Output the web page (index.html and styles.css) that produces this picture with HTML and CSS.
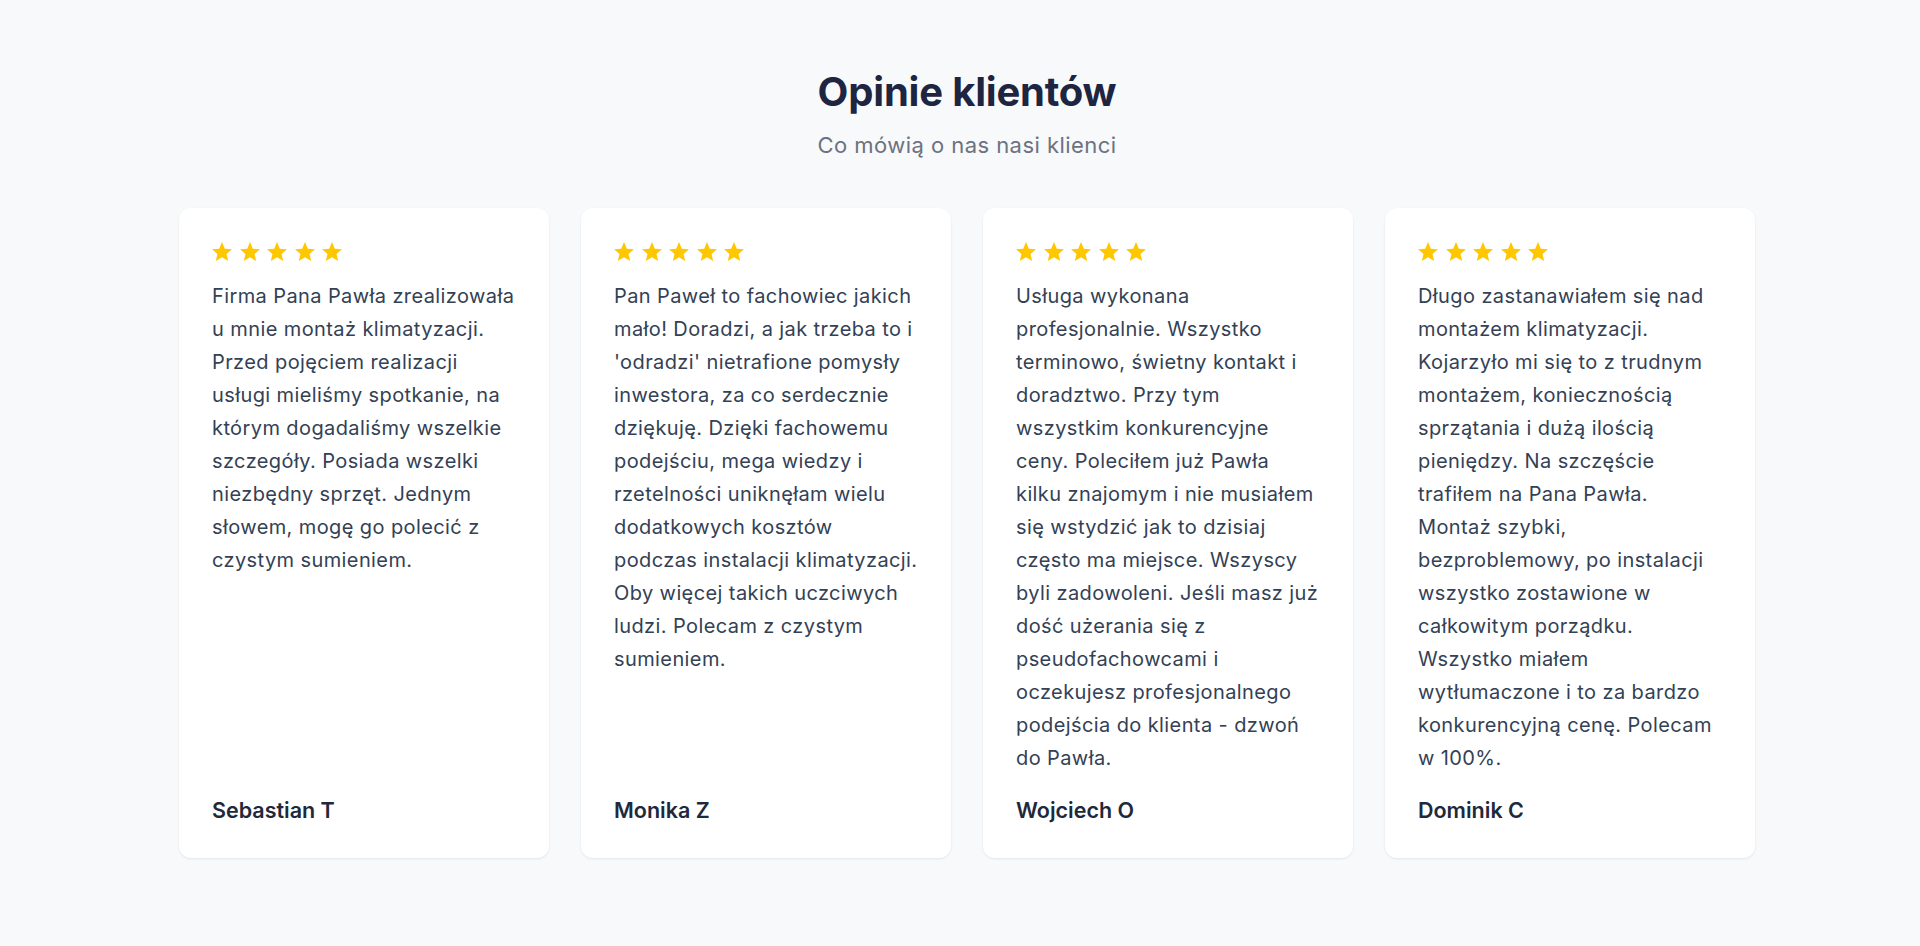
FILE: index.html
```html
<!DOCTYPE html>
<html lang="pl">
<head>
<meta charset="utf-8">
<title>Opinie klientów</title>
<link rel="stylesheet" href="styles.css">
</head>
<body>
<section class="testimonials">
  <header class="head">
    <h2 class="title">Opinie klientów</h2>
    <p class="subtitle">Co mówią o nas nasi klienci</p>
  </header>
  <div class="grid">
    <article class="card">
      <div class="stars">
        <svg viewBox="0 0 24 24"><path d="M12 17.27L18.18 21l-1.64-7.03L22 9.24l-7.19-.61L12 2 9.19 8.63 2 9.24l5.46 4.73L5.82 21z"/></svg>
        <svg viewBox="0 0 24 24"><path d="M12 17.27L18.18 21l-1.64-7.03L22 9.24l-7.19-.61L12 2 9.19 8.63 2 9.24l5.46 4.73L5.82 21z"/></svg>
        <svg viewBox="0 0 24 24"><path d="M12 17.27L18.18 21l-1.64-7.03L22 9.24l-7.19-.61L12 2 9.19 8.63 2 9.24l5.46 4.73L5.82 21z"/></svg>
        <svg viewBox="0 0 24 24"><path d="M12 17.27L18.18 21l-1.64-7.03L22 9.24l-7.19-.61L12 2 9.19 8.63 2 9.24l5.46 4.73L5.82 21z"/></svg>
        <svg viewBox="0 0 24 24"><path d="M12 17.27L18.18 21l-1.64-7.03L22 9.24l-7.19-.61L12 2 9.19 8.63 2 9.24l5.46 4.73L5.82 21z"/></svg>
      </div>
      <p class="text">Firma Pana Pawła zrealizowała u mnie montaż klimatyzacji. Przed pojęciem realizacji usługi mieliśmy spotkanie, na którym dogadaliśmy wszelkie szczegóły. Posiada wszelki niezbędny sprzęt. Jednym słowem, mogę go polecić z czystym sumieniem.</p>
      <p class="name">Sebastian T</p>
    </article>
    <article class="card">
      <div class="stars">
        <svg viewBox="0 0 24 24"><path d="M12 17.27L18.18 21l-1.64-7.03L22 9.24l-7.19-.61L12 2 9.19 8.63 2 9.24l5.46 4.73L5.82 21z"/></svg>
        <svg viewBox="0 0 24 24"><path d="M12 17.27L18.18 21l-1.64-7.03L22 9.24l-7.19-.61L12 2 9.19 8.63 2 9.24l5.46 4.73L5.82 21z"/></svg>
        <svg viewBox="0 0 24 24"><path d="M12 17.27L18.18 21l-1.64-7.03L22 9.24l-7.19-.61L12 2 9.19 8.63 2 9.24l5.46 4.73L5.82 21z"/></svg>
        <svg viewBox="0 0 24 24"><path d="M12 17.27L18.18 21l-1.64-7.03L22 9.24l-7.19-.61L12 2 9.19 8.63 2 9.24l5.46 4.73L5.82 21z"/></svg>
        <svg viewBox="0 0 24 24"><path d="M12 17.27L18.18 21l-1.64-7.03L22 9.24l-7.19-.61L12 2 9.19 8.63 2 9.24l5.46 4.73L5.82 21z"/></svg>
      </div>
      <p class="text">Pan Paweł to fachowiec jakich mało! Doradzi, a jak trzeba to i 'odradzi' nietrafione pomysły inwestora, za co serdecznie dziękuję. Dzięki fachowemu podejściu, mega wiedzy i rzetelności uniknęłam wielu dodatkowych kosztów podczas instalacji klimatyzacji. Oby więcej takich uczciwych ludzi. Polecam z czystym sumieniem.</p>
      <p class="name">Monika Z</p>
    </article>
    <article class="card">
      <div class="stars">
        <svg viewBox="0 0 24 24"><path d="M12 17.27L18.18 21l-1.64-7.03L22 9.24l-7.19-.61L12 2 9.19 8.63 2 9.24l5.46 4.73L5.82 21z"/></svg>
        <svg viewBox="0 0 24 24"><path d="M12 17.27L18.18 21l-1.64-7.03L22 9.24l-7.19-.61L12 2 9.19 8.63 2 9.24l5.46 4.73L5.82 21z"/></svg>
        <svg viewBox="0 0 24 24"><path d="M12 17.27L18.18 21l-1.64-7.03L22 9.24l-7.19-.61L12 2 9.19 8.63 2 9.24l5.46 4.73L5.82 21z"/></svg>
        <svg viewBox="0 0 24 24"><path d="M12 17.27L18.18 21l-1.64-7.03L22 9.24l-7.19-.61L12 2 9.19 8.63 2 9.24l5.46 4.73L5.82 21z"/></svg>
        <svg viewBox="0 0 24 24"><path d="M12 17.27L18.18 21l-1.64-7.03L22 9.24l-7.19-.61L12 2 9.19 8.63 2 9.24l5.46 4.73L5.82 21z"/></svg>
      </div>
      <p class="text">Usługa wykonana profesjonalnie. Wszystko terminowo, świetny kontakt i doradztwo. Przy tym wszystkim konkurencyjne ceny. Poleciłem już Pawła kilku znajomym i nie musiałem się wstydzić jak to dzisiaj często ma miejsce. Wszyscy byli zadowoleni. Jeśli masz już dość użerania się z pseudofachowcami i oczekujesz profesjonalnego podejścia do klienta - dzwoń do Pawła.</p>
      <p class="name">Wojciech O</p>
    </article>
    <article class="card">
      <div class="stars">
        <svg viewBox="0 0 24 24"><path d="M12 17.27L18.18 21l-1.64-7.03L22 9.24l-7.19-.61L12 2 9.19 8.63 2 9.24l5.46 4.73L5.82 21z"/></svg>
        <svg viewBox="0 0 24 24"><path d="M12 17.27L18.18 21l-1.64-7.03L22 9.24l-7.19-.61L12 2 9.19 8.63 2 9.24l5.46 4.73L5.82 21z"/></svg>
        <svg viewBox="0 0 24 24"><path d="M12 17.27L18.18 21l-1.64-7.03L22 9.24l-7.19-.61L12 2 9.19 8.63 2 9.24l5.46 4.73L5.82 21z"/></svg>
        <svg viewBox="0 0 24 24"><path d="M12 17.27L18.18 21l-1.64-7.03L22 9.24l-7.19-.61L12 2 9.19 8.63 2 9.24l5.46 4.73L5.82 21z"/></svg>
        <svg viewBox="0 0 24 24"><path d="M12 17.27L18.18 21l-1.64-7.03L22 9.24l-7.19-.61L12 2 9.19 8.63 2 9.24l5.46 4.73L5.82 21z"/></svg>
      </div>
      <p class="text">Długo zastanawiałem się nad montażem klimatyzacji. Kojarzyło mi się to z trudnym montażem, koniecznością sprzątania i dużą ilością pieniędzy. Na szczęście trafiłem na Pana Pawła. Montaż szybki, bezproblemowy, po instalacji wszystko zostawione w całkowitym porządku. Wszystko miałem wytłumaczone i to za bardzo konkurencyjną cenę. Polecam w 100%.</p>
      <p class="name">Dominik C</p>
    </article>
  </div>
</section>
</body>
</html>
```

FILE: styles.css
```css
* { box-sizing: border-box; }

html, body {
  margin: 0;
  padding: 0;
  background: #f8f9fb;
}

body {
  font-family: Inter, "Noto Sans", "Liberation Sans", sans-serif;
  color: #334155;
  min-height: 946px;
}

.testimonials {
  width: 1576px;
  margin-left: 179px;
  padding-top: 64px;
}

.head {
  text-align: center;
}

.title {
  margin: 0;
  font-size: 40px;
  line-height: 56px;
  font-weight: 700;
  color: #1e2541;
  letter-spacing: -0.2px;
}

.subtitle {
  margin: 10px 0 0;
  font-size: 22px;
  line-height: 30px;
  color: #6b7280;
  letter-spacing: 0.45px;
}

.grid {
  display: grid;
  grid-template-columns: repeat(4, 1fr);
  gap: 32px;
  margin-top: 48px;
}

.card {
  display: flex;
  flex-direction: column;
  background: #ffffff;
  border-radius: 12px;
  padding: 32px 33px 34px 33px;
  box-shadow: 0 1px 3px rgba(15, 23, 42, 0.06), 0 1px 2px rgba(15, 23, 42, 0.03);
  height: 650px;
}

.stars {
  display: flex;
  flex-shrink: 0;
  gap: 3.5px;
  height: 24px;
  margin-left: -2px;
}

.stars svg {
  width: 24px;
  height: 24px;
  fill: #ffc700;
}

.text {
  flex: 1 0 auto;
  margin: 16px 0 0;
  font-size: 20px;
  line-height: 33px;
  letter-spacing: 0.4px;
  color: #334155;
}

.name {
  flex-shrink: 0;
  margin: 20px 0 0;
  font-size: 21.5px;
  line-height: 28px;
  font-weight: 600;
  color: #1e293b;
}
```
